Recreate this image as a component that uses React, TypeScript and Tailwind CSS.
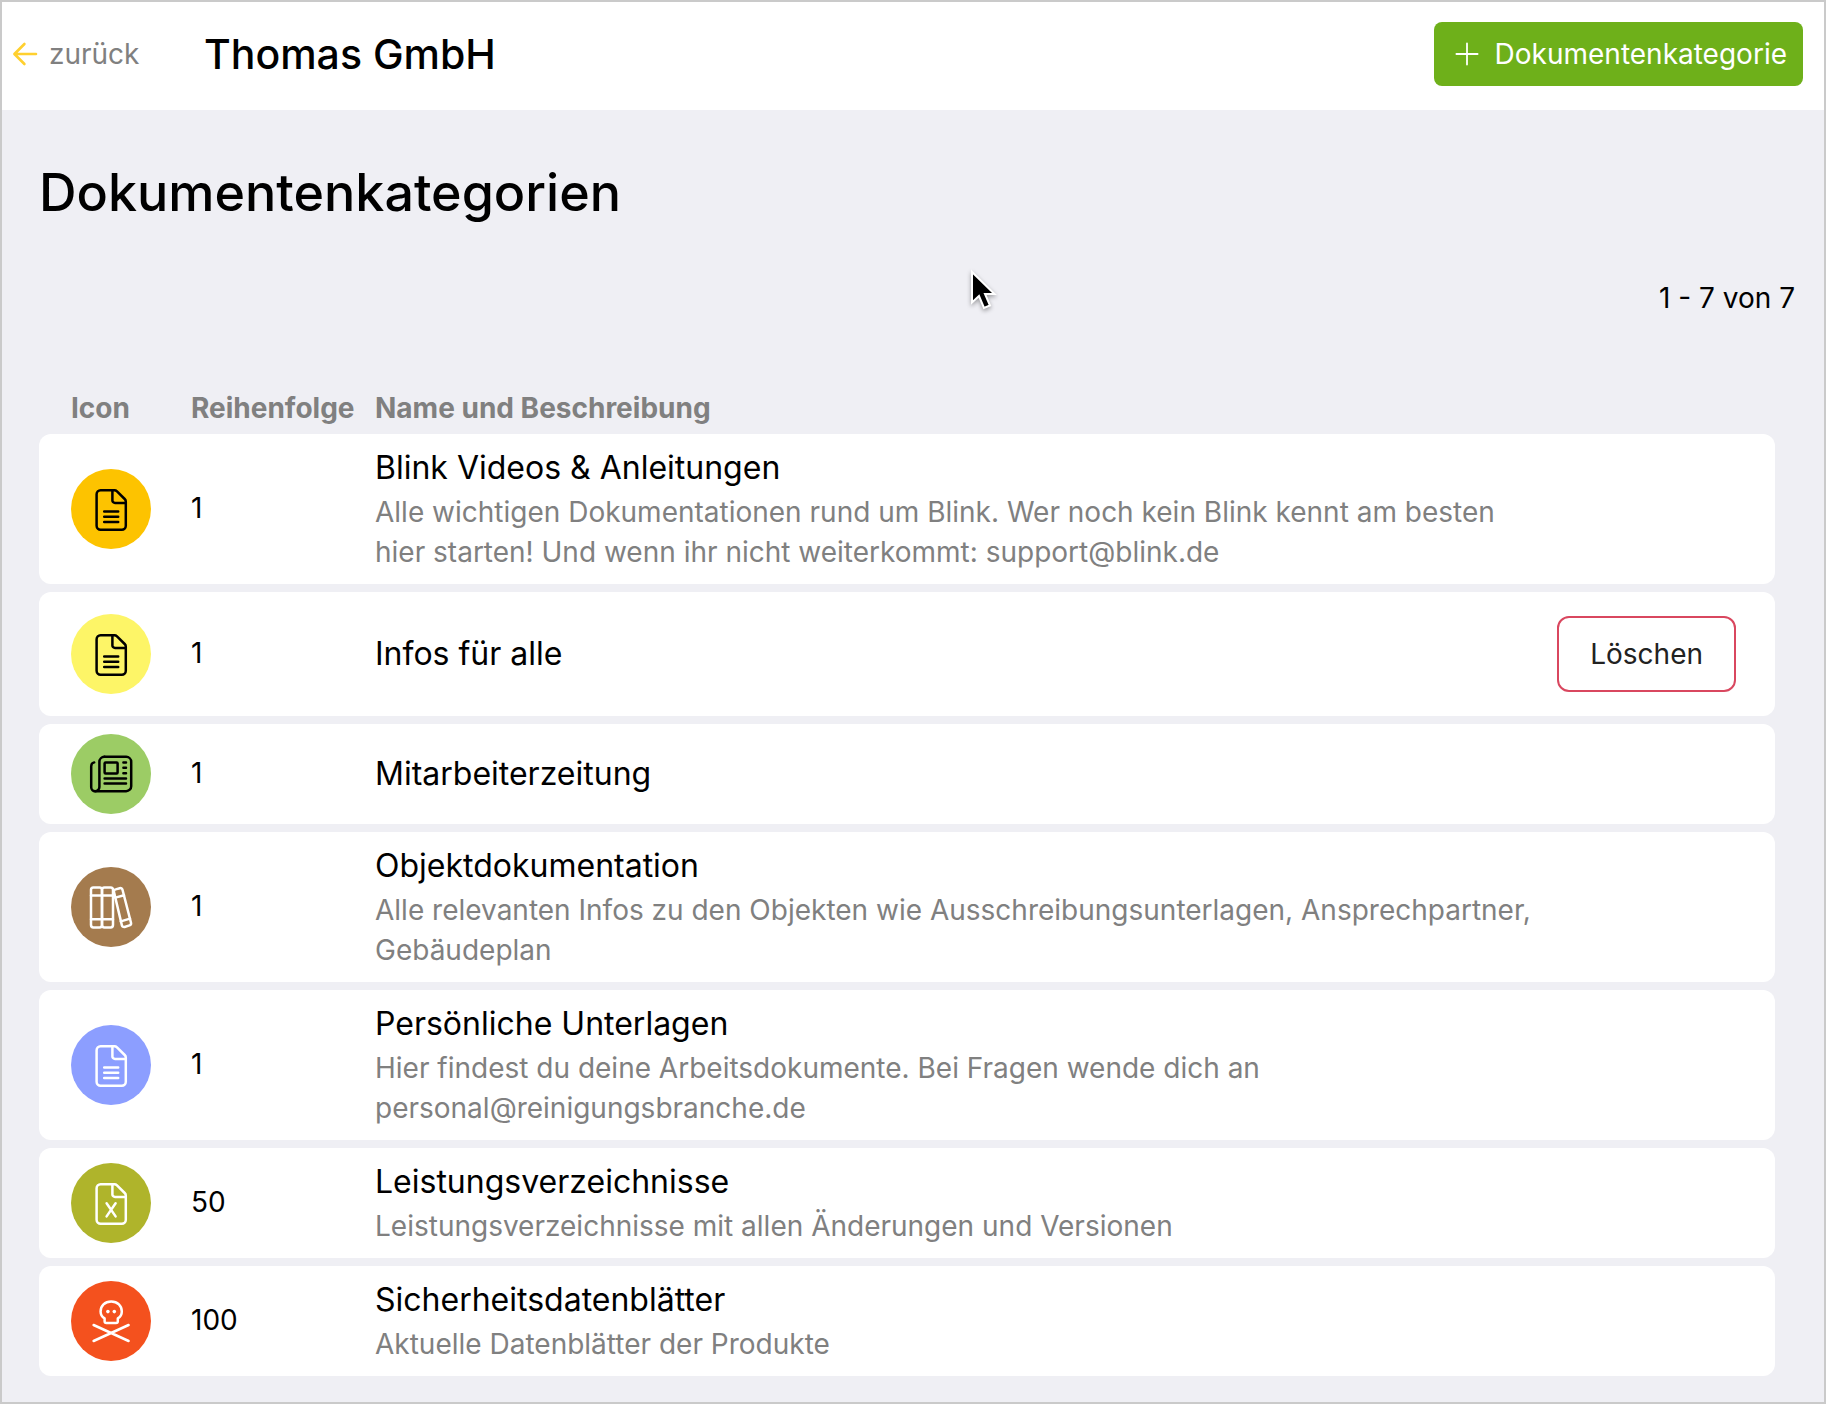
import type { ReactNode } from "react";

function Fold() {
  return (
    <>
      <path d="M29.6 21.2H43.4C44.4 21.2 45.3 21.6 46 22.3L53.7 30C54.4 30.7 54.8 31.6 54.8 32.6V56.8A4 4 0 0 1 50.8 60.8H29.6A4 4 0 0 1 25.6 56.8V25.2A4 4 0 0 1 29.6 21.2Z" />
      <path d="M41.4 21.4V31.4A2.6 2.6 0 0 0 44 34H54.6" />
    </>
  );
}

function FileText() {
  return (
    <>
      <Fold />
      <path d="M33.2 42.4H47.2M33.2 47.7H47.2M33.2 53H47.2" />
    </>
  );
}

function FileSheet() {
  return (
    <>
      <Fold />
      <path d="M35.6 40.2L44.6 53.4M44.6 40.2L35.6 53.4" />
    </>
  );
}

function Newspaper() {
  return (
    <>
      <path d="M33.4 22.8H55.2A5 5 0 0 1 60.2 27.8V52.2A5 5 0 0 1 55.2 57.2H24.2A4 4 0 0 1 20.2 53.2V32.2C20.2 30.2 21.4 28.8 23.2 28.4" />
      <path d="M33.4 22.8A5 5 0 0 0 28.4 27.8V53A4.2 4.2 0 0 1 24.2 57.2" />
      <rect x="33.6" y="28.4" width="13" height="11" rx="1" />
      <path d="M52.4 28.4H55M52.4 33.8H55M52.4 39.2H55M33.6 44.4H55M33.6 49.6H55" />
    </>
  );
}

function Books() {
  return (
    <>
      <rect x="20" y="20.4" width="11" height="40" rx="2.4" />
      <rect x="31" y="20.4" width="11" height="40" rx="2.4" />
      <path d="M20 28.6H42M20 52.2H42" />
      <path d="M44.6 22.4L48.8 21.2A2.2 2.2 0 0 1 51.5 22.8L60 55.8A2.2 2.2 0 0 1 58.5 58.4L53.6 60A2.2 2.2 0 0 1 50.9 58.4L43 25.1A2.2 2.2 0 0 1 44.6 22.4Z" />
      <path d="M44.4 30.6L53 28.2M49.8 54.4L59 51.6" />
    </>
  );
}

function Skull() {
  return (
    <>
      <path d="M40.2 20.4C33.8 20.4 29.6 24.8 29.6 30.4C29.6 33.8 31.2 36 33.6 37.4V40.2A1.8 1.8 0 0 0 35.4 42H45A1.8 1.8 0 0 0 46.8 40.2V37.4C49.2 36 50.8 33.8 50.8 30.4C50.8 24.8 46.6 20.4 40.2 20.4Z" />
      <circle cx="36.9" cy="30.6" r="1.8" fill="currentColor" stroke="none" />
      <circle cx="43.3" cy="30.6" r="1.8" fill="currentColor" stroke="none" />
      <path d="M22.6 44L57.6 60M57.6 44L22.6 60" />
    </>
  );
}

type Category = {
  name: string;
  order: number;
  color: string;
  icon: ReactNode;
  description?: string;
  deletable?: boolean;
};

const categories: Category[] = [
  {
    name: "Blink Videos & Anleitungen",
    order: 1,
    color: "bg-[#fdc300] text-black",
    icon: <FileText />,
    description:
      "Alle wichtigen Dokumentationen rund um Blink. Wer noch kein Blink kennt am besten hier starten! Und wenn ihr nicht weiterkommt: support@blink.de",
  },
  { name: "Infos für alle", order: 1, color: "bg-[#fdf567] text-black", icon: <FileText />, deletable: true },
  { name: "Mitarbeiterzeitung", order: 1, color: "bg-[#9ccc65] text-black", icon: <Newspaper /> },
  {
    name: "Objektdokumentation",
    order: 1,
    color: "bg-[#a47b4e] text-white",
    icon: <Books />,
    description:
      "Alle relevanten Infos zu den Objekten wie Ausschreibungsunterlagen, Ansprechpartner, Gebäudeplan",
  },
  {
    name: "Persönliche Unterlagen",
    order: 1,
    color: "bg-[#8c9eff] text-white",
    icon: <FileText />,
    description: "Hier findest du deine Arbeitsdokumente. Bei Fragen wende dich an personal@reinigungsbranche.de",
  },
  {
    name: "Leistungsverzeichnisse",
    order: 50,
    color: "bg-[#afb42b] text-white",
    icon: <FileSheet />,
    description: "Leistungsverzeichnisse mit allen Änderungen und Versionen",
  },
  {
    name: "Sicherheitsdatenblätter",
    order: 100,
    color: "bg-[#f4511e] text-white",
    icon: <Skull />,
    description: "Aktuelle Datenblätter der Produkte",
  },
];

function Row({ item }: { item: Category }) {
  return (
    <tr>
      <td className="rounded-l-xl bg-white py-2.5 pl-8">
        <div className={`size-20 rounded-full ${item.color}`}>
          <svg
            viewBox="0 0 80 80"
            className="size-20"
            fill="none"
            stroke="currentColor"
            strokeWidth="2.5"
            strokeLinecap="round"
            strokeLinejoin="round"
            aria-hidden="true"
          >
            {item.icon}
          </svg>
        </div>
      </td>
      <td className="bg-white pt-2 pb-2.5">{item.order}</td>
      <td className="bg-white py-2.5">
        <div className="text-[32px] leading-[48px]">{item.name}</div>
        {item.description && <p className="pb-0.5 leading-10 text-[#808080]">{item.description}</p>}
      </td>
      <td className="rounded-r-xl bg-white pr-[39px] text-right">
        {item.deletable && (
          <button
            type="button"
            className="my-6 h-[76px] rounded-xl border-2 border-[#d9475f] px-[31px] align-middle text-[#222]"
          >
            Löschen
          </button>
        )}
      </td>
    </tr>
  );
}

export default function App() {
  return (
    <div className="relative min-h-screen border-2 border-[#cacaca] bg-[#efeff4] font-['Inter',sans-serif] text-[28px] leading-10 text-black">
      <header className="flex h-[108px] items-center bg-white pr-[21px] pb-1 pl-2.5">
        <a href="#" className="flex w-48 items-center gap-[11px] text-[#808080]">
          <svg
            viewBox="0 0 26 26"
            className="size-[26px] text-[#ffd02f]"
            fill="none"
            stroke="currentColor"
            strokeWidth="2.6"
            strokeLinecap="round"
            strokeLinejoin="round"
            aria-hidden="true"
          >
            <path d="M24 13H2.6M12.4 3L2.4 13L12.4 23" />
          </svg>
          zurück
        </a>
        <div className="text-[41px] font-medium">Thomas GmbH</div>
        <button type="button" className="ml-auto flex h-16 items-center gap-[15px] rounded-lg bg-[#6eb01a] pr-4 pl-5 text-white">
          <svg
            viewBox="0 0 26 26"
            className="size-[26px]"
            fill="none"
            stroke="currentColor"
            strokeWidth="1.8"
            strokeLinecap="round"
            aria-hidden="true"
          >
            <path d="M13 2.4V23.6M2.4 13H23.6" />
          </svg>
          Dokumentenkategorie
        </button>
      </header>
      <main className="pr-[49px] pl-[37px]">
        <h1 className="pt-[51px] text-[52px] leading-[64px] font-medium">Dokumentenkategorien</h1>
        <p className="-mr-5 mt-[53px] text-right">1 - 7 von 7</p>
        <table className="mt-16 mb-4 w-full table-fixed border-separate border-spacing-x-0 border-spacing-y-2">
          <colgroup>
            <col className="w-[152px]" />
            <col className="w-[184px]" />
            <col />
            <col className="w-[230px]" />
          </colgroup>
          <thead>
            <tr className="text-left leading-9 text-[#808080]">
              <th scope="col" className="pl-8">Icon</th>
              <th scope="col">Reihenfolge</th>
              <th scope="col">Name und Beschreibung</th>
              <td />
            </tr>
          </thead>
          <tbody>
            {categories.map((item) => (
              <Row key={item.name} item={item} />
            ))}
          </tbody>
        </table>
      </main>
      <svg
        viewBox="0 0 32 46"
        className="pointer-events-none absolute top-[267px] left-[966px] h-[46px] w-8 drop-shadow-[0_2px_2px_rgba(0,0,0,0.35)]"
        aria-hidden="true"
      >
        <path
          d="M4 3V33.5L11 27L16 39L22 36.5L17 25H26.5Z"
          fill="black"
          stroke="white"
          strokeWidth="2"
        />
      </svg>
    </div>
  );
}
